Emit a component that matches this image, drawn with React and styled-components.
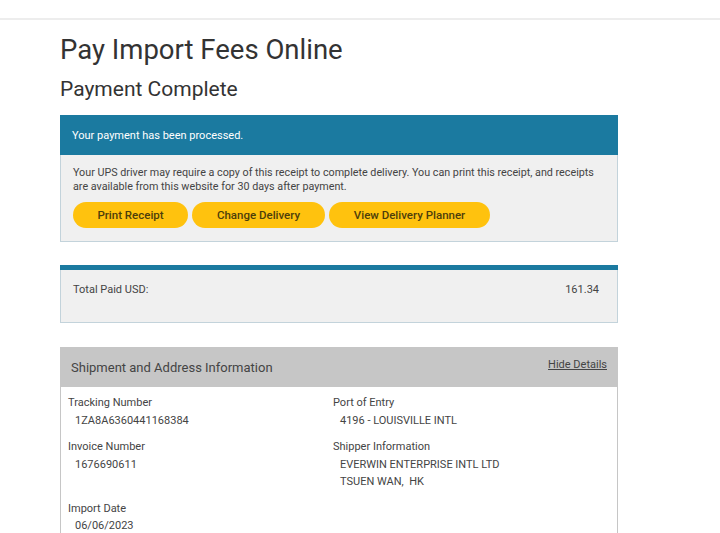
import React from "react";
import styled, { createGlobalStyle } from "styled-components";

const Global = createGlobalStyle`
  html, body { margin: 0; padding: 0; background: #fff; }
  body { font-family: Roboto, "Liberation Sans", Arial, sans-serif; color: #333; }
`;

const TopBar = styled.div`
  height: 18px;
  border-bottom: 2px solid #ededed;
`;

const Main = styled.main`
  width: 558px;
  margin-left: 60px;
  padding-top: 14px;
`;

const Title = styled.h1`
  margin: 0;
  font-size: 27.5px;
  font-weight: 400;
  line-height: 32px;
  color: #333;
`;

const Subtitle = styled.h2`
  margin: 10px 0 0;
  font-size: 21px;
  font-weight: 400;
  line-height: 26px;
  color: #333;
`;

const Panel = styled.section`
  margin-top: ${(p) => p.$mt || 23}px;
  border: 1px solid ${(p) => p.$border || "#c3d3db"};
  border-top: none;
  background: ${(p) => p.$bg || "#f0f0f0"};
`;

const BlueHead = styled.div`
  background: #1b7aa0;
  color: #fff;
  height: 40px;
  display: flex;
  align-items: center;
  padding: 0 12px;
  font-size: 11px;
  margin: 0 -1px;
`;

const BlueBar = styled.div`
  background: #1b7aa0;
  height: 5px;
  margin: 0 -1px;
`;

const Body = styled.div`
  padding: 11px 6px 13px 12px;
`;

const Para = styled.p`
  margin: 0;
  font-size: 10.75px;
  line-height: 13.5px;
  color: #444;
`;

const ButtonRow = styled.div`
  display: flex;
  gap: 4px;
  margin-top: 9px;
`;

const Button = styled.button`
  height: 26px;
  width: ${(p) => p.$w}px;
  border: none;
  border-radius: 13px;
  background: #ffc20e;
  color: #4d3e0b;
  font-family: Roboto, "Liberation Sans", Arial, sans-serif;
  font-size: 11.5px;
  font-weight: 500;
  padding: 0;
  cursor: pointer;
`;

const TotalRow = styled.div`
  display: flex;
  justify-content: space-between;
  align-items: flex-start;
  height: 52px;
  padding: 13px 18px 0 12px;
  box-sizing: border-box;
  font-size: 11px;
  color: #444;
`;

const ShipPanel = styled.section`
  margin-top: 24px;
  border: 1px solid #c6c6c6;
`;

const ShipHead = styled.div`
  background: #c6c6c6;
  height: 39px;
  display: flex;
  align-items: center;
  justify-content: space-between;
  padding: 0 11px 0 11px;
  margin: 0 -1px;
`;

const ShipTitle = styled.span`
  font-size: 13px;
  color: #444;
`;

const HideLink = styled.a`
  font-size: 11px;
  color: #444;
  text-decoration: underline;
  margin-top: -7px;
`;

const DetailGrid = styled.div`
  display: grid;
  grid-template-columns: 265px 1fr;
  row-gap: 9px;
  padding: 7px 8px 12px 7px;
`;

const Field = styled.div`
  font-size: 11px;
  color: #444;
`;

const Label = styled.div`
  line-height: 17.5px;
`;

const Value = styled.div`
  line-height: 17.5px;
  padding-left: 7px;
`;

export default function App() {
  return (
    <>
      <Global />
      <TopBar />
      <Main>
        <Title>Pay Import Fees Online</Title>
        <Subtitle>Payment Complete</Subtitle>

        <Panel $mt={13}>
          <BlueHead>Your payment has been processed.</BlueHead>
          <Body>
            <Para>
              Your UPS driver may require a copy of this receipt to complete delivery. You can print this receipt, and receipts are available from this website for 30 days after payment.
            </Para>
            <ButtonRow>
              <Button $w={115}>Print Receipt</Button>
              <Button $w={133}>Change Delivery</Button>
              <Button $w={161}>View Delivery Planner</Button>
            </ButtonRow>
          </Body>
        </Panel>

        <Panel>
          <BlueBar />
          <TotalRow>
            <span>Total Paid USD:</span>
            <span>161.34</span>
          </TotalRow>
        </Panel>

        <ShipPanel>
          <ShipHead>
            <ShipTitle>Shipment and Address Information</ShipTitle>
            <HideLink href="#">Hide Details</HideLink>
          </ShipHead>
          <DetailGrid>
            <Field>
              <Label>Tracking Number</Label>
              <Value>1ZA8A6360441168384</Value>
            </Field>
            <Field>
              <Label>Port of Entry</Label>
              <Value>4196 - LOUISVILLE INTL</Value>
            </Field>
            <Field>
              <Label>Invoice Number</Label>
              <Value>1676690611</Value>
            </Field>
            <Field>
              <Label>Shipper Information</Label>
              <Value>EVERWIN ENTERPRISE INTL LTD</Value>
              <Value>TSUEN WAN,&nbsp; HK</Value>
            </Field>
            <Field>
              <Label>Import Date</Label>
              <Value>06/06/2023</Value>
            </Field>
          </DetailGrid>
        </ShipPanel>
      </Main>
    </>
  );
}
